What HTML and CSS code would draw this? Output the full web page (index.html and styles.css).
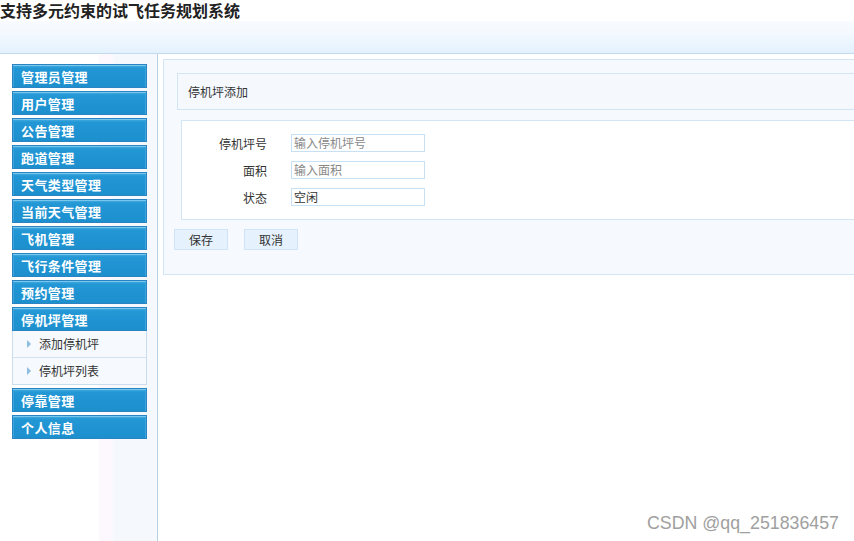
FILE: index.html
```html
<!DOCTYPE html>
<html lang="zh">
<head>
<meta charset="utf-8">
<title>支持多元约束的试飞任务规划系统</title>
<link rel="stylesheet" href="styles.css">
</head>
<body>
<div class="title">支持多元约束的试飞任务规划系统</div>
<div class="band"></div>
<div class="main">
  <aside class="sidebar">
    <ul class="menu">
      <li class="menu-item">管理员管理</li>
      <li class="menu-item">用户管理</li>
      <li class="menu-item">公告管理</li>
      <li class="menu-item">跑道管理</li>
      <li class="menu-item">天气类型管理</li>
      <li class="menu-item">当前天气管理</li>
      <li class="menu-item">飞机管理</li>
      <li class="menu-item">飞行条件管理</li>
      <li class="menu-item">预约管理</li>
      <li class="menu-group">
        <div class="menu-item">停机坪管理</div>
        <ul class="submenu">
          <li class="sub-item"><span class="tri"></span>添加停机坪</li>
          <li class="sub-item"><span class="tri"></span>停机坪列表</li>
        </ul>
      </li>
      <li class="menu-item">停靠管理</li>
      <li class="menu-item">个人信息</li>
    </ul>
  </aside>
  <section class="content">
    <div class="panel">
      <div class="panel-head">停机坪添加</div>
      <div class="form-box">
        <div class="row"><label class="lbl">停机坪号</label><div class="inp ph">输入停机坪号</div></div>
        <div class="row"><label class="lbl">面积</label><div class="inp ph">输入面积</div></div>
        <div class="row"><label class="lbl">状态</label><div class="inp">空闲</div></div>
      </div>
      <div class="btns">
        <button class="btn">保存</button>
        <button class="btn">取消</button>
      </div>
    </div>
  </section>
</div>
<div class="watermark">CSDN @qq_251836457</div>
</body>
</html>
```
FILE: styles.css
```css
html, body {
  margin: 0;
  padding: 0;
  width: 854px;
  height: 541px;
  overflow: hidden;
  background: #ffffff;
  font-family: "Noto Sans CJK SC", "Noto Sans", sans-serif;
  color: #333;
  position: relative;
}
ul { list-style: none; margin: 0; padding: 0; }

.title {
  height: 21px;
  line-height: 21px;
  font-size: 16px;
  font-weight: bold;
  color: #222;
  overflow: visible;
}
.band {
  height: 32px;
  background: linear-gradient(#f8fbff 0%, #f3f9ff 40%, #e3f1fd 100%);
  border-bottom: 1px solid #c3dbef;
}
.main {
  display: flex;
  height: 487px;
}
.sidebar {
  width: 158px;
  flex: none;
  border-right: 1px solid #b4d1e8;
  background: linear-gradient(to right, #ffffff 0, #ffffff 98px, #fdf8fd 100px, #fdf8fd 111px, #f5f9fe 114px, #f5f9fe 100%);
  padding: 10px 0 0 12px;
  box-sizing: border-box;
}
.menu {
  width: 135px;
  display: flex;
  flex-direction: column;
  gap: 3px;
}
.menu-item {
  height: 24px;
  box-sizing: border-box;
  border: 1px solid #2a84c2;
  background: linear-gradient(#4aaee2 0, #2498d5 3px, #1f93d2 60%, #1d8fcd 100%);
  box-shadow: inset 0 1px 0 #7ac7ee, inset 1px 0 0 #3aa4dc, inset -1px 0 0 #3aa4dc;
  color: #fff;
  font-size: 13px;
  font-weight: bold;
  line-height: 23px;
  padding-left: 8px;
  letter-spacing: 0.4px;
}
.submenu {
  background: #f6f9fd;
  border: 1px solid #cadced;
  border-top: none;
}
.sub-item {
  height: 26px;
  line-height: 26px;
  font-size: 12px;
  color: #333;
  padding-left: 14px;
  display: flex;
  align-items: center;
}
.sub-item + .sub-item { border-top: 1px solid #d3e2ee; }
.tri {
  width: 0;
  height: 0;
  border-left: 4px solid #8cbde0;
  border-top: 4px solid transparent;
  border-bottom: 4px solid transparent;
  margin-right: 8px;
}

.content {
  flex: 1;
  padding: 5px 0 0 5px;
}
.panel {
  width: 720px;
  height: 216px;
  box-sizing: border-box;
  background: #f6faff;
  border: 1px solid #d3e5f5;
  padding: 13px 0 0 10px;
}
.panel-head {
  height: 37px;
  box-sizing: border-box;
  margin-left: 3px;
  border: 1px solid #d3e5f5;
  background: #f5f9fe;
  font-size: 12px;
  line-height: 35px;
  padding-left: 10px;
  color: #333;
}
.form-box {
  margin: 10px 0 0 7px;
  height: 100px;
  box-sizing: border-box;
  background: #ffffff;
  border: 1px solid #d3e5f5;
  padding: 13px 0 0 0;
  display: flex;
  flex-direction: column;
  gap: 9px;
}
.row {
  display: flex;
  align-items: center;
  height: 18px;
}
.lbl {
  width: 85px;
  text-align: right;
  font-size: 12px;
  color: #333;
  margin-right: 24px;
}
.inp {
  width: 134px;
  height: 18px;
  box-sizing: border-box;
  border: 1px solid #c6e0f5;
  background: #fff;
  font-size: 12px;
  line-height: 16px;
  padding-left: 2px;
  color: #333;
}
.inp.ph { color: #888; }
.btns {
  margin-top: 9px;
  display: flex;
  gap: 16px;
}
.btn {
  width: 54px;
  height: 21px;
  box-sizing: border-box;
  border: 1px solid #cfe4f7;
  background: #e5f1fd;
  font-family: "Noto Sans CJK SC", sans-serif;
  font-size: 12px;
  color: #333;
  padding: 0;
  line-height: 19px;
}
.watermark {
  position: absolute;
  right: 15px;
  bottom: 8px;
  font-family: "Liberation Sans", Arial, sans-serif;
  font-size: 17.8px;
  line-height: 20px;
  color: #a0a0a0;
}
```
